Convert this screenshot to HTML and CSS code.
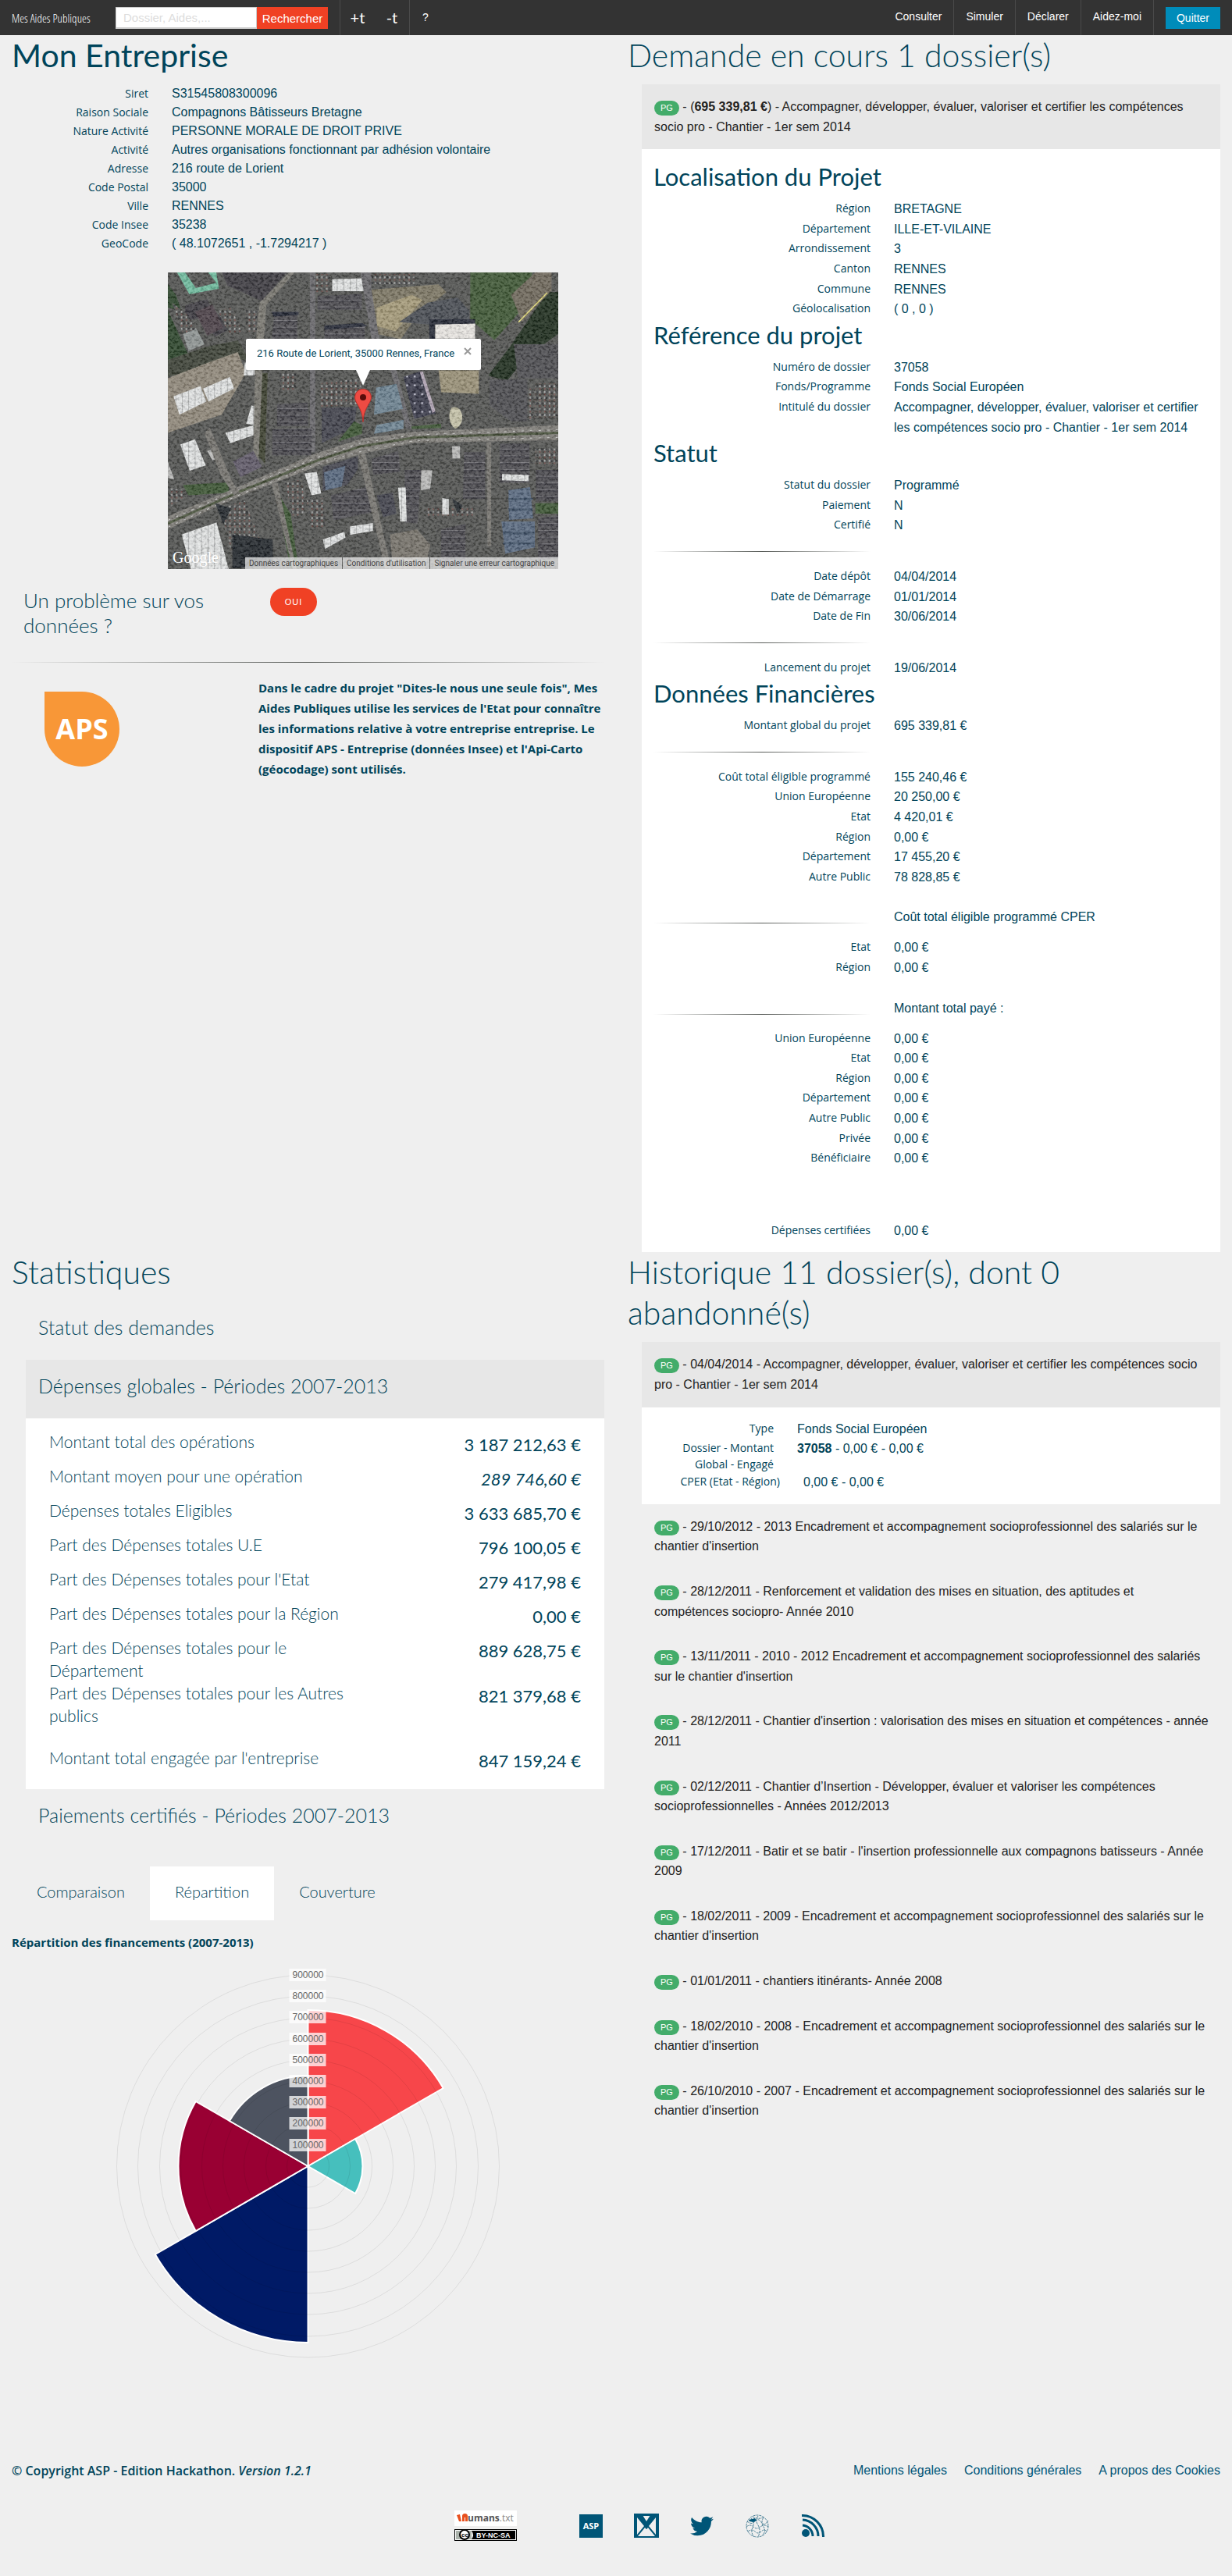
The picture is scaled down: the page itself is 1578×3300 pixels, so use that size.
FILE: index.html
```html
<!DOCTYPE html>
<html lang="fr">
<head>
<meta charset="utf-8">
<title>Mes Aides Publiques</title>
<meta name="viewport" content="width=device-width, initial-scale=1">
<link rel="stylesheet" href="styles.css">
</head>
<body>
<header class="topbar">
  <a class="brand" href="#">Mes Aides Publiques</a>
  <form class="search">
    <input type="search" placeholder="Dossier, Aides,..." aria-label="Rechercher un dossier ou une aide">
    <button type="button">Rechercher</button>
  </form>
  <div class="sizes"><button type="button">+t</button><button type="button">-t</button></div>
  <a class="help" href="#">?</a>
  <nav class="menu">
    <a href="#">Consulter</a><a href="#">Simuler</a><a href="#">Déclarer</a><a href="#">Aidez-moi</a>
    <span class="quit"><button type="button">Quitter</button></span>
  </nav>
</header>

<main class="columns">
<section class="col">
  <h1>Mon Entreprise</h1>
  <dl class="rows company">
    <div><dt>Siret</dt><dd>S31545808300096</dd></div>
    <div><dt>Raison Sociale</dt><dd>Compagnons Bâtisseurs Bretagne</dd></div>
    <div><dt>Nature Activité</dt><dd>PERSONNE MORALE DE DROIT PRIVE</dd></div>
    <div><dt>Activité</dt><dd>Autres organisations fonctionnant par adhésion volontaire</dd></div>
    <div><dt>Adresse</dt><dd>216 route de Lorient</dd></div>
    <div><dt>Code Postal</dt><dd>35000</dd></div>
    <div><dt>Ville</dt><dd>RENNES</dd></div>
    <div><dt>Code Insee</dt><dd>35238</dd></div>
    <div><dt>GeoCode</dt><dd>( 48.1072651 , -1.7294217 )</dd></div>
  </dl>

  <div class="map">
    <svg class="aerial" viewBox="44 54 1451 1139" preserveAspectRatio="none" aria-hidden="true">
      <defs>
        <filter id="grain" x="0" y="0" width="1" height="1"><feTurbulence type="fractalNoise" baseFrequency=".09 .11" numOctaves="3" seed="7"/><feColorMatrix values="2.4 0 0 0 -.85  2.4 0 0 0 -.85  2.4 0 0 0 -.83  0 0 0 0 .16"/></filter>
        <pattern id="cars" width="18" height="22" patternUnits="userSpaceOnUse"><path fill="#53534f" d="M0 0h18v22H0z"/><path fill="#a5a8a8" d="M2 3h5v8H2z"/><path fill="#33363c" d="M11 3h4v8h-4z"/><path fill="#7b4a46" d="M3 14h4v6H3z"/></pattern>
        <pattern id="ribs" width="30" height="26" patternUnits="userSpaceOnUse"><path fill="#4a494d" d="M0 0h30v26H0z"/><path fill="#77767a" d="M0 3h30v3H0z"/><path fill="#3a393f" d="M0 6h30v6H0z"/></pattern>
        <pattern id="whiteribs" width="24" height="20" patternUnits="userSpaceOnUse"><path fill="#e6e8e7" d="M0 0h24v20H0z"/><path fill="#b0b2b1" d="M0 0h3v20H0z"/></pattern>
        <pattern id="dots" width="28" height="34" patternUnits="userSpaceOnUse"><path fill="#393a49" d="M0 0h28v34H0z"/><path fill="#cfcfdd" d="M6 8h7v7H6z"/></pattern>
      </defs>
      <path fill="#525350" d="M44 54h1451v1139H44z"/>
      <path fill="#2c452a" d="M44 200l90 200-90 50zM44 100l30 40 20 60-50-10z"/>
      <path fill="#3f5834" d="M1168 54h230l-10 110-130 150-90-80z"/>
      <path fill="#7d7763" d="M800 120l250-20 30 30-110 90-60 90-90-20z"/>
      <path fill="#a69b78" d="M820 190l130-50 40 20-100 120-70-20z"/>
      <path fill="#494d53" d="M1010 170l110-20 44 50v34l-150 20-110-10z"/>
      <path fill="#1e2d1c" d="M1455 130h40v160l-120 90-70 90-70-20 80-110z"/>
      <path fill="#70695b" d="M1320 140l90-86h60v70l-110 120z"/>
      <path stroke="#eae27c" stroke-width="5" fill="none" d="M1347 245l107-113"/>
      <path fill="#71bfa0" d="M78 54h30l40 60 76-20-30-40h30l10 62-110 22z"/>
      <path fill="#3d3b40" d="M110 180l80-24 10 24 80 90-60 30-60-70-60 10zM245 54h240l-90 110-130-60z"/>
      <path fill="#4c4147" d="M145 205l65-28 40 90-60 30z"/>
      <path fill="#8f9593" d="M100 290l50-20 30 60-60 26z"/>
      <path fill="url(#cars)" d="M60 170l50 40 40 60-50 20zM230 200l50-10 40 90-50 10zM330 200h60v80h-50zM595 60h55v70h-55zM800 60h160v40H800z"/>
      <path fill="#3d4236" d="M44 390l140-50 120-25 40 70-300 70z"/>
      <path fill="#91897a" d="M44 460l150-60 110-40 30 80-90 160-200 70z"/>
      <path fill="url(#whiteribs)" d="M65 530l100-40 22 60-100 50zM175 500l100-45 15 45-95 50zM655 80l132-4v50H655zM330 400l36 0v50h-40zM335 635l20-70 34 10-20 66zM258 670l108-30 8 35-98 35zM90 715l55-20 40 100-60 20zM552 826l46-6 16 82-36 8zM620 1080l80-30 4 22-76 44zM95 1060l130-46 45 179H130z"/>
      <path fill="#bcbcba" d="M44 780l24 70-24-6zM190 740l40-14 10 40-30 10zM985 814h42l-8 72-34 4zM1100 722h30v46h-28z"/>
      <path fill="#3c402e" d="M385 440l30 0-10 350-30-40 0-120z"/>
      <path fill="#7a7870" d="M385 170l110-116h20L410 180 400 330 380 800h-20l10-480z"/>
      <path fill="#68676a" d="M572 54h20l0 690h-20zM760 54h40v60l30 200 60 100 60 240h-20l-60-230-70-120z"/>
      <path fill="url(#ribs)" d="M440 215l85-5v98h-95zM600 145l165-8v60H600zM626 265l150-8v56H626zM450 560l115-6v90H450zM432 656l146-4v104H432zM800 770l100-30 8 80-100 10zM1145 744l78 0v180h-82zM1278 712h110v150h-110zM1412 812h83v120h-83zM924 812l62 0-14 206-46-4zM650 910l140-34 10 100-140 30zM1060 1040l90-20v160h-90zM1420 1000l75-14v170h-75z"/>
      <path fill="#242834" d="M430 205h100v12l-94 6zM626 258l140-10 20 12-160 14zM1016 234l170 0v20l-150 0v80h-20z"/>
      <path fill="#ece9e4" d="M1038 254l148-4v58h-148z"/>
      <path fill="#9b9277" d="M1050 430h150v90l-140-6z"/>
      <path fill="url(#cars)" d="M610 480l150-20v100l-150 10zM460 440h60v70h-60zM1410 480h85v130h-85zM1380 500h26v120h-26zM480 860l60-10 20 120-50 30zM560 930l60-10 10 110-50 10zM240 960l90-30 60 160-110 40zM1000 960h180v30h-180zM1410 730h85v60h-85zM44 880l60 10v30l-60 40z"/>
      <path fill="#4d4d50" d="M1240 465h140l0 160h-60l-80-60zM1330 330h165v130h-150z"/>
      <path fill="url(#dots)" d="M920 455l60-20 60 160-80 22z"/>
      <path fill="#b6a9b8" d="M980 435l12 0 46 150-10 10z"/>
      <path fill="#6e8492" d="M818 496l76-14 24 96-108 22zM820 640l100-20v34l-110 20z"/>
      <path fill="#41424b" d="M616 574l130-4-10 80-120 60zM620 800l130-40 0 50-40 60-90 24zM820 910l60-10 14 80-50 14z"/>
      <path fill="#596a80" d="M624 822l80-26-14 80-60 14zM1310 890l80-12 12 120-90 6zM1284 1010h124v100l-110 24z"/>
      <path fill="#3e5065" d="M1310 920h90v8h-90zM1310 960h90v8h-90zM1290 1050h116v10h-116zM1290 1090h116v8h-116z"/>
      <path fill="#605a68" d="M286 780l76-40 32 60-80 40z"/>
      <path fill="#c7c4a9" d="M1098 574c40-20 60 60 14 80-26-20-26-60-14-80z"/>
      <path fill="#3c5532" d="M736 626l30 14v34l-90 30zM950 645l110-10v16l-110 4zM100 870l170-10v40l-150 10zM440 880l60 100 30 210h-30zM1410 940h85v40h-85z"/>
      <path fill="#807e78" d="M44 990L300 880 590 750 770 690 960 666 1495 640v58L960 708 760 752 600 798 310 914 44 1040z"/>
      <path stroke="#465038" stroke-width="9" fill="none" d="M44 1018L310 896 600 776 760 722 960 688l535-18"/>
      <path stroke="#c9c9c6" stroke-width="3" stroke-dasharray="9 23" fill="none" d="M44 1006L310 886 600 764 760 710 960 678l535-20M44 1032L310 908 600 788l160-46 200-42 535-12"/>
      <path fill="#77756f" d="M750 750h28l96 443h-22zM1228 706h18v400h-14zM430 866l22-4 70 331h-14zM200 650l80 200 30 50-20 10-50-80-60-160z"/>
      <path fill="#77736a" d="M870 1060l100-20 50 60-20 93H880z"/>
      <path fill="#22272b" d="M284 1060l150 20v100l-150 10zM220 940l60 20-30 60zM1100 920l40 30-20 30z"/>
      <path fill="url(#whiteribs)" d="M1286 828l100 4-2 24-98-4zM720 1030l86-14v30l-86 16zM1064 920l24 4v60h-24zM900 880h28l4 130h-24z"/>
      <path filter="url(#grain)" d="M44 54h1451v1139H44z"/>
    </svg>
    <svg class="pin" viewBox="0 0 22 43" aria-hidden="true"><path fill="#ee4b43" stroke="#b3312c" d="M11 .5C5 .5.6 5 .6 11c0 8 9 12 10.4 31.500C12.400 23 21.400 19 21.400 11 21.400 5 17 .5 11 .5z"/><circle cx="11" cy="11" r="4" fill="#590d0b"/></svg>
    <div class="bubble"><span>216 Route de Lorient, 35000 Rennes, France</span><button type="button" aria-label="Fermer"><svg viewBox="0 0 10 10" aria-hidden="true"><path d="M1 1l8 8M9 1L1 9"/></svg></button></div>
    <span class="google">Google</span>
    <div class="credits"><a href="#">Données cartographiques</a><a href="#">Conditions d'utilisation</a><a href="#">Signaler une erreur cartographique</a></div>
  </div>

  <div class="problem">
    <h4>Un problème sur vos données ?</h4>
    <div><button type="button">OUI</button></div>
  </div>
  <hr>
  <div class="aps">
    <svg viewBox="0 0 96 97" role="img" aria-label="APS"><path fill="#f89737" d="M0 1h48a48 48 0 1 1-48 48z"/><text x="48" y="62" text-anchor="middle">APS</text></svg>
    <p>Dans le cadre du projet "Dites-le nous une seule fois", Mes Aides Publiques utilise les services de l'Etat pour connaître les informations relative à votre entreprise entreprise. Le dispositif APS - Entreprise (données Insee) et l'Api-Carto (géocodage) sont utilisés.</p>
  </div>
</section>

<section class="col">
  <h2>Demande en cours 1 dossier(s)</h2>
  <div class="accordion">
    <a class="item open" href="#"><span class="badge">PG</span> - (<b>695 339,81 €</b>) - Accompagner, développer, évaluer, valoriser et certifier les compétences socio pro - Chantier - 1er sem 2014</a>
    <div class="panel">
      <h3>Localisation du Projet</h3>
      <dl class="rows">
        <div><dt>Région</dt><dd>BRETAGNE</dd></div>
        <div><dt>Département</dt><dd>ILLE-ET-VILAINE</dd></div>
        <div><dt>Arrondissement</dt><dd>3</dd></div>
        <div><dt>Canton</dt><dd>RENNES</dd></div>
        <div><dt>Commune</dt><dd>RENNES</dd></div>
        <div><dt>Géolocalisation</dt><dd>( 0 , 0 )</dd></div>
      </dl>
      <h3>Référence du projet</h3>
      <dl class="rows">
        <div><dt>Numéro de dossier</dt><dd>37058</dd></div>
        <div><dt>Fonds/Programme</dt><dd>Fonds Social Européen</dd></div>
        <div><dt>Intitulé du dossier</dt><dd>Accompagner, développer, évaluer, valoriser et certifier les compétences socio pro - Chantier - 1er sem 2014</dd></div>
      </dl>
      <h3>Statut</h3>
      <dl class="rows">
        <div><dt>Statut du dossier</dt><dd>Programmé</dd></div>
        <div><dt>Paiement</dt><dd>N</dd></div>
        <div><dt>Certifié</dt><dd>N</dd></div>
      </dl>
      <div class="split"><hr></div>
      <dl class="rows">
        <div><dt>Date dépôt</dt><dd>04/04/2014</dd></div>
        <div><dt>Date de Démarrage</dt><dd>01/01/2014</dd></div>
        <div><dt>Date de Fin</dt><dd>30/06/2014</dd></div>
      </dl>
      <div class="split"><hr></div>
      <dl class="rows">
        <div><dt>Lancement du projet</dt><dd>19/06/2014</dd></div>
      </dl>
      <h3>Données Financières</h3>
      <dl class="rows">
        <div><dt>Montant global du projet</dt><dd>695 339,81 €</dd></div>
      </dl>
      <div class="split"><hr></div>
      <dl class="rows">
        <div><dt>Coût total éligible programmé</dt><dd>155 240,46 €</dd></div>
        <div><dt>Union Européenne</dt><dd>20 250,00 €</dd></div>
        <div><dt>Etat</dt><dd>4 420,01 €</dd></div>
        <div><dt>Région</dt><dd>0,00 €</dd></div>
        <div><dt>Département</dt><dd>17 455,20 €</dd></div>
        <div><dt>Autre Public</dt><dd>78 828,85 €</dd></div>
      </dl>
      <div class="split titled"><hr><p>Coût total éligible programmé CPER</p></div>
      <dl class="rows">
        <div><dt>Etat</dt><dd>0,00 €</dd></div>
        <div><dt>Région</dt><dd>0,00 €</dd></div>
      </dl>
      <div class="split titled"><hr><p>Montant total payé :</p></div>
      <dl class="rows">
        <div><dt>Union Européenne</dt><dd>0,00 €</dd></div>
        <div><dt>Etat</dt><dd>0,00 €</dd></div>
        <div><dt>Région</dt><dd>0,00 €</dd></div>
        <div><dt>Département</dt><dd>0,00 €</dd></div>
        <div><dt>Autre Public</dt><dd>0,00 €</dd></div>
        <div><dt>Privée</dt><dd>0,00 €</dd></div>
        <div><dt>Bénéficiaire</dt><dd>0,00 €</dd></div>
      </dl>
      <dl class="rows certified">
        <div><dt>Dépenses certifiées</dt><dd>0,00 €</dd></div>
      </dl>
    </div>
  </div>
</section>

<section class="col">
  <h2>Statistiques</h2>
  <div class="accordion stats">
    <a class="head" href="#">Statut des demandes</a>
    <a class="head open" href="#">Dépenses globales - Périodes 2007-2013</a>
    <div class="panel">
      <table>
        <tr><th scope="row">Montant total des opérations</th><td>3 187 212,63 €</td></tr>
        <tr><th scope="row">Montant moyen pour une opération</th><td><i>289 746,60 €</i></td></tr>
        <tr><th scope="row">Dépenses totales Eligibles</th><td>3 633 685,70 €</td></tr>
        <tr><th scope="row">Part des Dépenses totales U.E</th><td>796 100,05 €</td></tr>
        <tr><th scope="row">Part des Dépenses totales pour l'Etat</th><td>279 417,98 €</td></tr>
        <tr><th scope="row">Part des Dépenses totales pour la Région</th><td>0,00 €</td></tr>
        <tr><th scope="row">Part des Dépenses totales pour le Département</th><td>889 628,75 €</td></tr>
        <tr><th scope="row">Part des Dépenses totales pour les Autres publics</th><td>821 379,68 €</td></tr>
        <tr class="total"><th scope="row">Montant total engagée par l'entreprise</th><td>847 159,24 €</td></tr>
      </table>
    </div>
    <a class="head" href="#">Paiements certifiés - Périodes 2007-2013</a>
  </div>
  <nav class="tabs"><a href="#">Comparaison</a><a class="active" href="#">Répartition</a><a href="#">Couverture</a></nav>
  <p class="caption">Répartition des financements (2007-2013)</p>
  <svg class="chart" viewBox="-254 -254 508 508" role="img" aria-label="Répartition des financements">
    <g stroke="#fff" stroke-width="2">
      <path fill="#f7464a" d="M0 0V-200A200 200 0 0 1 173.200 -100z"/>
      <path fill="#46bfbd" d="M0 0L60.600 -35A70 70 0 0 1 60.600 35z"/>
      <path fill="#001a66" d="M0 0V226A226 226 0 0 1 -195.700 113z"/>
      <path fill="#990033" d="M0 0L-143.800 83A166 166 0 0 1 -143.800 -83z"/>
      <path fill="#4d5360" d="M0 0L-100.500 -58A116 116 0 0 1 0 -116z"/>
    </g>
    <g fill="none" stroke="#000" stroke-opacity=".08">
      <circle r="27"/><circle r="54"/><circle r="82"/><circle r="109"/><circle r="136"/><circle r="163"/><circle r="190"/><circle r="218"/><circle r="245"/>
    </g>
    <g fill="#fff" fill-opacity=".75">
      <path d="M-24-253h47v16h-47zM-24-226h47v16h-47zM-24-199h47v16h-47zM-24-171h47v16h-47zM-24-144h47v16h-47zM-24-117h47v16h-47zM-24-90h47v16h-47zM-24-63h47v16h-47zM-24-35h47v16h-47z"/>
    </g>
    <g class="scale">
      <text y="-241">900000</text><text y="-214">800000</text><text y="-187">700000</text><text y="-159">600000</text><text y="-132">500000</text><text y="-105">400000</text><text y="-78">300000</text><text y="-51">200000</text><text y="-23">100000</text>
    </g>
  </svg>
</section>

<section class="col">
  <h2>Historique 11 dossier(s), dont 0<br>abandonné(s)</h2>
  <div class="accordion">
    <a class="item open" href="#"><span class="badge">PG</span> - 04/04/2014 - Accompagner, développer, évaluer, valoriser et certifier les compétences socio pro - Chantier - 1er sem 2014</a>
    <div class="panel">
      <dl class="rows history">
        <div><dt>Type</dt><dd>Fonds Social Européen</dd></div>
        <div><dt>Dossier - Montant<br>Global - Engagé</dt><dd><b>37058</b> - 0,00 € - 0,00 €</dd></div>
        <div class="wide"><dt>CPER (Etat - Région)</dt><dd>0,00 € - 0,00 €</dd></div>
      </dl>
    </div>
    <a class="item" href="#"><span class="badge">PG</span> - 29/10/2012 - 2013 Encadrement et accompagnement socioprofessionnel des salariés sur le chantier d'insertion</a>
    <a class="item" href="#"><span class="badge">PG</span> - 28/12/2011 - Renforcement et validation des mises en situation, des aptitudes et compétences sociopro- Année 2010</a>
    <a class="item" href="#"><span class="badge">PG</span> - 13/11/2011 - 2010 - 2012 Encadrement et accompagnement socioprofessionnel des salariés sur le chantier d'insertion</a>
    <a class="item" href="#"><span class="badge">PG</span> - 28/12/2011 - Chantier d'insertion : valorisation des mises en situation et compétences - année 2011</a>
    <a class="item" href="#"><span class="badge">PG</span> - 02/12/2011 - Chantier d’Insertion - Développer, évaluer et valoriser les compétences socioprofessionnelles - Années 2012/2013</a>
    <a class="item" href="#"><span class="badge">PG</span> - 17/12/2011 - Batir et se batir - l'insertion professionnelle aux compagnons batisseurs - Année 2009</a>
    <a class="item" href="#"><span class="badge">PG</span> - 18/02/2011 - 2009 - Encadrement et accompagnement socioprofessionnel des salariés sur le chantier d'insertion</a>
    <a class="item" href="#"><span class="badge">PG</span> - 01/01/2011 - chantiers itinérants- Année 2008</a>
    <a class="item" href="#"><span class="badge">PG</span> - 18/02/2010 - 2008 - Encadrement et accompagnement socioprofessionnel des salariés sur le chantier d'insertion</a>
    <a class="item" href="#"><span class="badge">PG</span> - 26/10/2010 - 2007 - Encadrement et accompagnement socioprofessionnel des salariés sur le chantier d'insertion</a>
  </div>
</section>
</main>

<footer>
  <div class="legal">
    <p>© Copyright ASP - Edition Hackathon. <i>Version 1.2.1</i></p>
    <nav><a href="#">Mentions légales</a><a href="#">Conditions générales</a><a href="#">A propos des Cookies</a></nav>
  </div>
  <div class="social">
    <div class="stamps">
      <a href="#" aria-label="humans.txt"><svg width="80" height="20" viewBox="0 0 80 20"><path fill="#fff" d="M0 0h80v20H0z"/><path fill="#e8501e" d="M3 6l4-1 2 9-3 0zM10 7c0-4 7-4 7 0v7h-3V9h-1v5h-3z"/><text class="humans" x="17" y="14">umans<tspan class="txt">.txt</tspan></text></svg></a>
      <a href="#" aria-label="Licence Creative Commons"><svg width="80" height="15" viewBox="0 0 80 15"><path fill="#000" d="M0 0h80v15H0z"/><path fill="#fff" d="M1 1h78v13H1z"/><path fill="#aab2ab" d="M2 2h20v11H2z"/><path fill="#000" d="M24 2h54v11H22q4-5 0-11z"/><circle cx="13" cy="7" r="6" fill="#fff" stroke="#000" stroke-width="2"/><text class="cc" x="9" y="10">cc</text><text class="by" x="28" y="11">BY-NC-SA</text></svg></a>
    </div>
    <a href="#" aria-label="ASP"><svg width="30" height="30" viewBox="0 0 30 30"><path fill="#005577" d="M0 0h30v30H0z"/><text class="asp" x="15" y="19" text-anchor="middle">ASP</text></svg></a>
    <a href="#" aria-label="Courriel"><svg width="32" height="31" viewBox="0 0 32 31"><path fill="#005577" d="M0 0h32v31H0z"/><path fill="#efefef" d="M4 5l9 11L4 27zM28 5l-9 11 9 11zM9 3h14l-7 9zM5 29l9-11 2 2 2-2 9 11z"/><path fill="#005577" d="M6 2h5l5 8 5-8h5L16 20z"/></svg></a>
    <a href="#" aria-label="Twitter"><svg width="30" height="30" viewBox="0 2 24 20"><path fill="#005577" d="M23.950 4.570a10 10 0 0 1-2.820.77 4.960 4.960 0 0 0 2.160-2.720c-.95.55-2 .95-3.130 1.180a4.920 4.920 0 0 0-8.380 4.480C7.690 8.090 4.070 6.130 1.640 3.160a4.920 4.920 0 0 0 1.520 6.570 4.900 4.900 0 0 1-2.230-.61v.06c0 2.390 1.700 4.380 3.950 4.830a4.960 4.960 0 0 1-2.210.08 4.940 4.940 0 0 0 4.600 3.420A9.870 9.870 0 0 1 0 19.540a13.990 13.990 0 0 0 7.550 2.210c9.050 0 14-7.500 14-13.980l-.02-.64a9.940 9.940 0 0 0 2.420-2.560z"/></svg></a>
    <a href="#" aria-label="Wikipédia"><svg width="32" height="30" viewBox="0 0 32 30"><g fill="none" stroke="#4f8398" stroke-width="1" stroke-dasharray="3 1"><circle cx="16" cy="15" r="14"/><path d="M3 9q6 5 10 0t8 1 9-2M2 16q5-4 9 0t9 0 10 0M4 22q5-4 9 0t8 0 7 0M8 5q5 6 2 12t2 12M17 2q-4 6 0 12t0 15M24 4q-4 6 0 12t-2 11M10 3q6 4 14 1"/></g><path fill="#005577" d="M5 7l8-2 2 3-4 2-5-1z"/></svg></a>
    <a href="#" aria-label="Flux RSS"><svg width="30" height="30" viewBox="0 0 30 30"><circle cx="6" cy="24" r="5" fill="#005577"/><path fill="none" stroke="#005577" stroke-width="3" d="M2 14a14 14 0 0 1 13 14M2 7a21 21 0 0 1 20 21M1 1.500A27 27 0 0 1 28.500 29"/></svg></a>
  </div>
</footer>
</body>
</html>
```
FILE: styles.css
```css
*, *::before, *::after { box-sizing: border-box; }

body {
  margin: 0;
  background: #efefef;
  color: #00445a;
  font: 16px/1.6 "Liberation Sans", Arial, sans-serif;
}

a { color: inherit; text-decoration: none; }
button { border: 0; margin: 0; font-family: inherit; cursor: pointer; }
h1, h2, h3, h4, p, dl, dd { margin: 0; }

/* Top bar */
.topbar {
  display: flex;
  align-items: center;
  height: 45px;
  padding: 0 15px;
  background: #333;
  color: #fff;
  font-size: 14px;
}
.brand { width: 133px; font: 300 15px/42px "Open Sans Condensed Light", "Open Sans Condensed", "Liberation Sans Narrow", "DejaVu Sans Condensed", sans-serif; white-space: nowrap; }
.search { display: flex; width: 272px; margin-right: 15px; }
.search input {
  flex: 1;
  min-width: 0;
  height: 28px;
  padding: 0 9px;
  border: 1px solid #ccc;
  border-bottom-width: 2px;
  border-radius: 0;
  background: #fff;
  font: 15px "Liberation Sans", Arial, sans-serif;
}
.search input::placeholder { color: #ddd; }
.search button { width: 91px; padding: 2px 0 0; background: #f04124; color: #fff; font-size: 15px; }
.sizes { display: flex; align-self: stretch; border: solid #4a4a4a; border-width: 0 1px; }
.sizes button { width: 44px; padding: 0 0 2px; background: none; color: #fff; font: 20px Lato, sans-serif; }
.help { padding: 0 16px; }
.menu { display: flex; align-self: stretch; margin-left: auto; line-height: 43px; }
.menu a { padding: 0 15px; border-right: 1px solid #4a4a4a; }
.quit { display: flex; align-items: center; padding-left: 15px; }
.quit button { width: 70px; height: 28px; background: #008cba; color: #fff; font-size: 14px; }

/* Page grid */
.columns { display: grid; grid-template-columns: 1fr 1fr; }
.col { min-width: 0; padding: 0 15px; }

h1, h2, h3, h4, .stats, .tabs { font-family: Lato, "Open Sans", sans-serif; font-weight: 300; }
h1, h2 { margin-bottom: 11px; font-size: 41px; line-height: 52px; }
h1 { font-weight: 400; }
h3 { margin-bottom: 9px; font-size: 31px; line-height: 40px; font-weight: 400; }

hr { height: 1px; border: 0; background: linear-gradient(90deg, rgba(60, 64, 60, 0), rgba(60, 64, 60, .85), rgba(60, 64, 60, 0)); }

/* Label and value rows */
.rows > div, .split { display: grid; grid-template-columns: 278fr 403fr; column-gap: 30px; }
.rows dt { padding-top: 1px; font: 14px/21px "Open Sans", "Noto Sans", sans-serif; text-align: right; }
.company > div { grid-template-columns: 175fr 554fr; line-height: 24px; }
.history > div { grid-template-columns: 154fr 527fr; }
.history > .wide { grid-template-columns: 162fr 519fr; }
.split hr { width: 100%; margin: 20px 0 19px; }
.titled hr { margin: 46px 0 18px; }
.titled p { padding-top: 26px; }
.certified { padding-top: 67px; }

/* Map */
.map { position: relative; width: 500px; height: 380px; margin: 25px auto 0 200px; overflow: hidden; font-family: Roboto, sans-serif; }
.aerial { display: block; width: 100%; height: 100%; }
.bubble {
  position: absolute;
  left: 100px;
  top: 85px;
  display: flex;
  justify-content: space-between;
  width: 301px;
  height: 40px;
  padding: 10px 12px 0 14px;
  border-radius: 2px;
  background: #fff;
  font-size: 13px;
  line-height: 18px;
  white-space: nowrap;
}
.bubble::after {
  content: "";
  position: absolute;
  left: 141px;
  top: 40px;
  border: solid transparent;
  border-width: 20px 9px 0;
  border-top-color: #fff;
}
.bubble button { width: 10px; height: 12px; padding: 0; background: none; }
.bubble button svg { display: block; width: 10px; height: 10px; fill: none; stroke: #999; stroke-width: 2; }
.pin { position: absolute; left: 239px; top: 149px; width: 22px; height: 43px; }
.google { position: absolute; left: 6px; bottom: 2px; color: #fff; font: 20px/26px "Liberation Serif", serif; }
.credits { position: absolute; right: 0; bottom: 0; display: flex; gap: 1px; color: #444; font-size: 10px; line-height: 15px; }
.credits a { padding: 0 5px; background: rgba(245, 245, 245, .7); white-space: nowrap; }

/* Data problem and APS notice */
.problem { display: grid; grid-template-columns: 331fr 428fr; padding-top: 24px; }
.problem h4 { padding-left: 15px; font-size: 26px; line-height: 32px; max-width: 300px; }
.problem button { width: 60px; height: 36px; border-radius: 18px; background: #f04124; color: #fff; font-size: 11px; letter-spacing: 1px; }
.problem + hr { margin: 31px 0 19px; }
.aps { display: grid; grid-template-columns: 316fr 443fr; }
.aps svg { width: 96px; height: 97px; margin: 17px 0 0 42px; }
.aps text { fill: #fff; font: 700 36px "Open Sans", sans-serif; }
.aps p { font: 700 15px/26px "Open Sans", sans-serif; }

/* Accordions */
.accordion { padding-left: 18px; }
.item { display: block; padding: 16px 13px 16px 16px; color: #222; }
.item.open, .head.open { background: #e7e7e7; }
.badge { display: inline-block; padding: 0 8px; border-radius: 10px; background: #43ac6a; color: #fff; font-size: 11px; line-height: 19px; }
.panel { padding: 15px; background: #fff; }
.head { display: block; height: 75px; padding: 16px; font-size: 25px; line-height: 34px; }
table { width: 100%; border-collapse: collapse; }
th, td { height: 44px; padding: 0 15px; vertical-align: top; font-weight: 400; }
th { width: 60%; font-size: 21px; line-height: 29px; font-weight: 300; text-align: left; }
td { font-size: 22px; line-height: 38px; text-align: right; white-space: nowrap; }
.total th, .total td { padding: 25px 15px 2px; }

/* Tabs and chart */
.tabs { display: flex; margin-top: 24px; font-size: 20px; }
.tabs a { height: 69px; padding: 16px 32px; }
.tabs .active { background: #fff; }
.caption { margin-top: 15px; font: 700 15px/26px "Open Sans", sans-serif; }
.chart { display: block; width: 100%; height: 508px; margin-top: 20px; }
.scale text { fill: #666; font: 12px "Liberation Sans", sans-serif; text-anchor: middle; }

/* Footer */
footer { padding: 123px 15px 45px; }
.legal { display: flex; justify-content: space-between; color: #005577; }
.legal p { color: #00445a; font: 600 16px/26px "Open Sans", sans-serif; }
.legal nav { display: flex; gap: 22px; }
.social { display: flex; align-items: center; justify-content: center; gap: 40px; margin-top: 38px; padding-left: 60px; }
.social a, .social svg { display: block; }
.stamps { display: grid; gap: 4px; margin-right: 40px; }
.humans { fill: #555; font: 700 12px "Open Sans", sans-serif; }
.txt { fill: #888; font-weight: 400; }
.cc { fill: #000; font: 700 8px "Liberation Sans", sans-serif; }
.by { fill: #fff; font: 700 9px "Liberation Sans", sans-serif; }
.asp { fill: #fff; font: 700 11px "Open Sans", sans-serif; }
```
